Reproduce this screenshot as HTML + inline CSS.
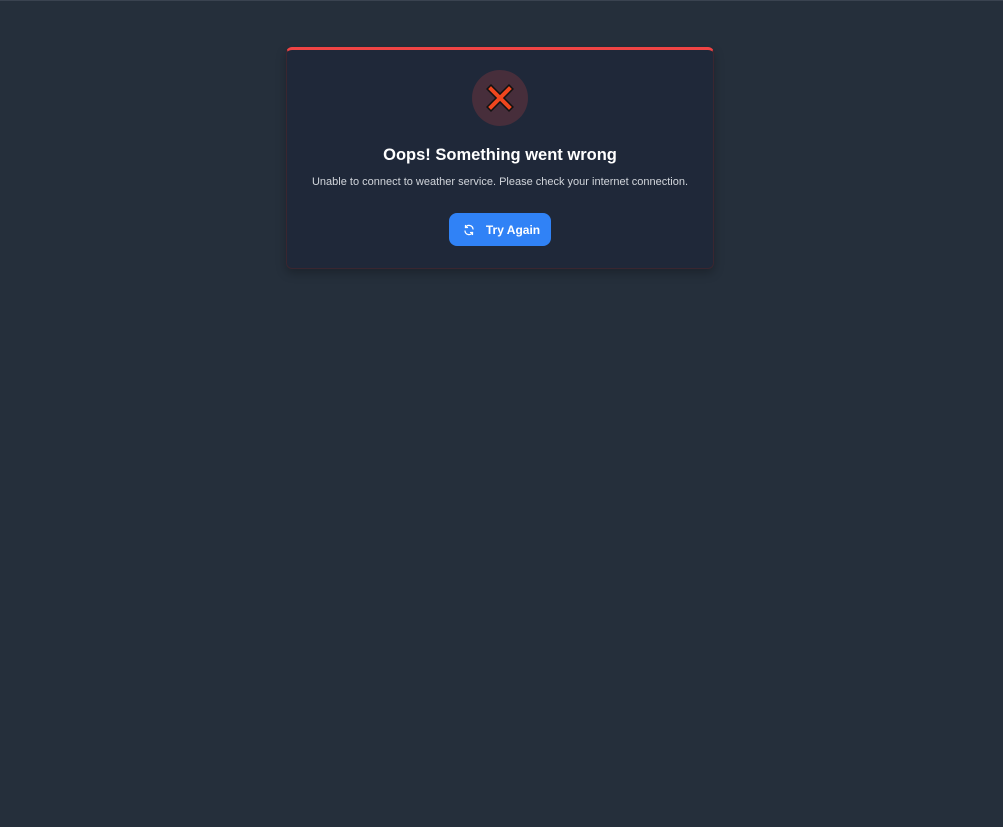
<!DOCTYPE html>
<html><head><style>
html,body{margin:0;padding:0;}
body{width:1003px;height:827px;background:#252f3b;border-top:1px solid #3a4350;box-sizing:border-box;font-family:"Liberation Sans",sans-serif;position:relative;overflow:hidden}
.card{position:absolute;left:286px;top:46px;width:428px;height:222px;box-sizing:border-box;background:#1f2839;border-top:3px solid #ef4444;border-radius:6px;border-left:1px solid #3a2630;border-right:1px solid #3a2630;border-bottom:1px solid #3a2630;box-shadow:0 4px 10px rgba(0,0,0,.25)}
.circ{position:absolute;left:185px;top:20px;width:56px;height:56px;border-radius:50%;background:#472e3b}
.title{position:absolute;left:0;right:0;top:96px;text-align:center;color:#fff;font-weight:bold;font-size:16.5px}
.sub{position:absolute;left:0;right:0;top:126px;text-align:center;color:#d1d5db;font-size:11px}
.btn{position:absolute;left:162px;top:163px;width:102px;height:33px;background:#3082f6;border-radius:8px;color:#fff;font-weight:bold;font-size:12px;display:flex;align-items:center;justify-content:center;gap:11px;padding-left:3px;box-sizing:border-box}
</style></head><body>
<div class="card">
<div class="circ"><svg width="56" height="56" viewBox="0 0 56 56"><path d="M19 19L37 37M37 19L19 37" stroke="#111" stroke-width="7" stroke-linecap="square"/><path d="M19 19L37 37M37 19L19 37" stroke="#f0461e" stroke-width="4" stroke-linecap="square"/></svg></div>
<div class="title">Oops! Something went wrong</div>
<div class="sub">Unable to connect to weather service. Please check your internet connection.</div>
<div class="btn"><svg width="12" height="12" viewBox="0 0 24 24" fill="none" stroke="#fff" stroke-width="2.5" stroke-linecap="round"><path d="M20 10A8 8 0 0 0 5 7M4 14a8 8 0 0 0 15 3"/><path d="M5 3v4h4M19 21v-4h-4"/></svg><span>Try Again</span></div>
</div>
</body></html>
